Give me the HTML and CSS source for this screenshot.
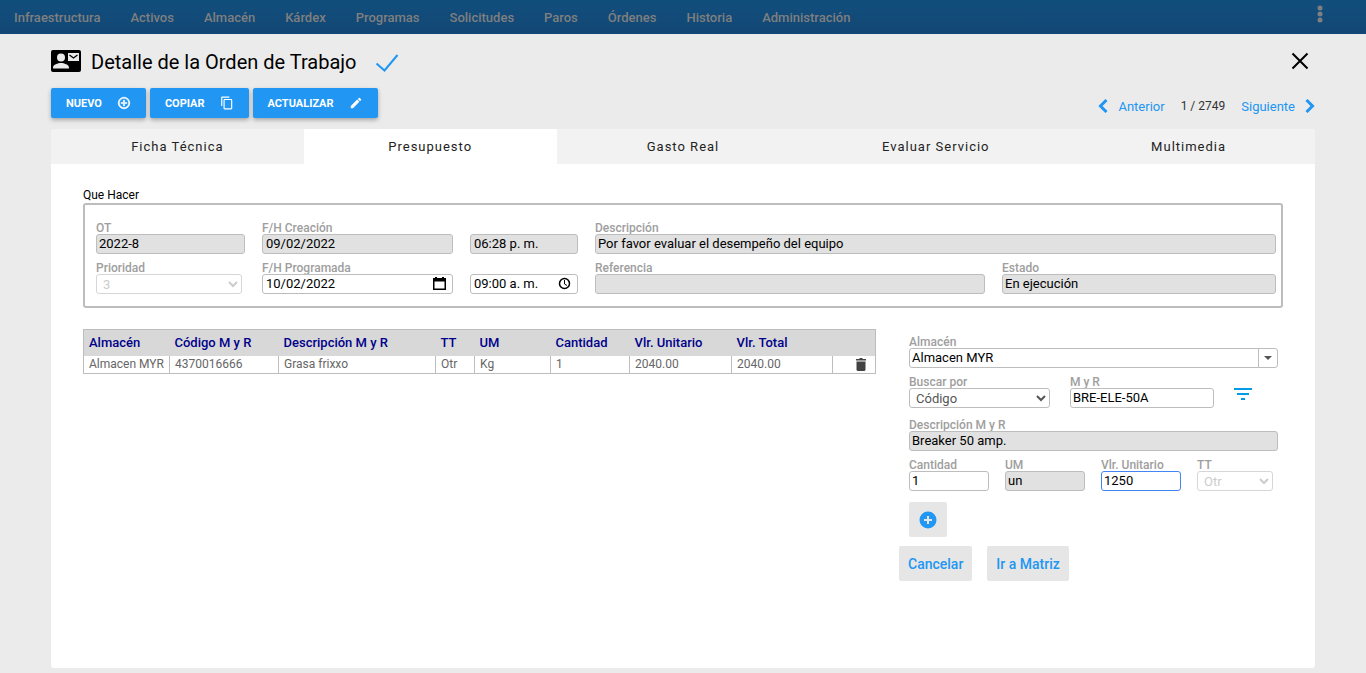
FILE: index.html
```
<!DOCTYPE html>
<html lang="es">

<head>
    <title>Detalle de la Orden de Trabajo</title>
    <meta charset="utf-8">
    <meta name="viewport" content="width=device-width, initial-scale=1">
    <link rel="stylesheet" href="styles.css">
</head>

<body>
    <nav class="navbar">
        <a href="#">Infraestructura</a>
        <a href="#">Activos</a>
        <a href="#">Almacén</a>
        <a href="#">Kárdex</a>
        <a href="#">Programas</a>
        <a href="#">Solicitudes</a>
        <a href="#">Paros</a>
        <a href="#">Órdenes</a>
        <a href="#">Historia</a>
        <a href="#">Administración</a>
        <button type="button" class="icon-btn more" aria-label="Más opciones">
            <svg width="24" height="24" viewBox="0 0 24 24" fill="currentColor">
                <circle cx="12" cy="6" r="2.500" />
                <circle cx="12" cy="12" r="2.500" />
                <circle cx="12" cy="18" r="2.500" />
            </svg>
        </button>
    </nav>

    <main class="page">
        <header class="title-row">
            <svg width="30" height="22" viewBox="0 0 30 22">
                <rect width="30" height="22" rx="2" />
                <circle cx="10" cy="7.500" r="4" fill="#ebebeb" />
                <path fill="#ebebeb" d="M2 18.500v-1c0-3 5-4.500 8-4.500s8 1.500 8 4.500v1zM17 3h11v8H17z" />
                <path fill="none" stroke="#000" stroke-width="1.200" d="M18.500 5l4 3 4-3" />
            </svg>
            <h1>Detalle de la Orden de Trabajo</h1>
            <svg class="check" width="24" height="20" viewBox="0 0 24 20" fill="none" stroke="#2196f3" stroke-width="2">
                <path d="M1.500 10.500l8 7L22.500 2" />
            </svg>
            <button type="button" class="icon-btn close" aria-label="Cerrar">
                <svg width="18" height="18" viewBox="0 0 18 18" fill="none" stroke="#000" stroke-width="2">
                    <path d="M1.500 1.500l15 15M16.500 1.500l-15 15" />
                </svg>
            </button>
        </header>

        <div class="toolbar">
            <button type="button" class="btn">NUEVO
                <svg width="14" height="14" viewBox="0 0 24 24" fill="currentColor" stroke="currentColor">
                    <path d="M13 7h-2v4H7v2h4v4h2v-4h4v-2h-4V7zm-1-5C6.480 2 2 6.480 2 12s4.480 10 10 10 10-4.480 10-10S17.520 2 12 2zm0 18c-4.410 0-8-3.590-8-8s3.590-8 8-8 8 3.590 8 8-3.590 8-8 8z" />
                </svg>
            </button>
            <button type="button" class="btn">COPIAR
                <svg width="14" height="14" viewBox="0 0 24 24" fill="currentColor">
                    <path d="M16 1H4c-1.100 0-2 .9-2 2v14h2V3h12V1zm3 4H8c-1.100 0-2 .9-2 2v14c0 1.100.9 2 2 2h11c1.100 0 2-.9 2-2V7c0-1.100-.9-2-2-2zm0 16H8V7h11v14z" />
                </svg>
            </button>
            <button type="button" class="btn">ACTUALIZAR
                <svg width="14" height="14" viewBox="0 0 24 24" fill="currentColor">
                    <path d="M3 17.250V21h3.750L17.810 9.940l-3.750-3.750L3 17.250zM20.710 7.040a1 1 0 0 0 0-1.410l-2.340-2.340a1 1 0 0 0-1.410 0l-1.830 1.830 3.750 3.750 1.830-1.830z" />
                </svg>
            </button>
            <div class="pager">
                <a href="#">
                    <svg width="10" height="14" viewBox="0 0 10 14" fill="none" stroke="currentColor" stroke-width="3">
                        <path d="M8.500 1L2.500 7l6 6" />
                    </svg>
                    Anterior</a>
                <span>1 / 2749</span>
                <a href="#">Siguiente
                    <svg width="10" height="14" viewBox="0 0 10 14" fill="none" stroke="currentColor" stroke-width="3">
                        <path d="M1.500 1l6 6-6 6" />
                    </svg>
                </a>
            </div>
        </div>

        <div class="tabs" role="tablist">
            <button type="button" role="tab">Ficha Técnica</button>
            <button type="button" role="tab" class="active" aria-selected="true">Presupuesto</button>
            <button type="button" role="tab">Gasto Real</button>
            <button type="button" role="tab">Evaluar Servicio</button>
            <button type="button" role="tab">Multimedia</button>
        </div>

        <section class="panel">
            <h2>Que Hacer</h2>
            <div class="order">
                <div class="field">
                    <label for="ot">OT</label>
                    <input type="text" id="ot" value="2022-8" readonly>
                </div>
                <div class="field">
                    <label for="creacion">F/H Creación</label>
                    <input type="text" id="creacion" class="date" value="09/02/2022" readonly>
                </div>
                <div class="field">
                    <input type="text" class="date" aria-label="Hora de creación" value="06:28 p. m." readonly>
                </div>
                <div class="field wide">
                    <label for="descripcion">Descripción</label>
                    <input type="text" id="descripcion" value="Por favor evaluar el desempeño del equipo" readonly>
                </div>
                <div class="field">
                    <label for="prioridad">Prioridad</label>
                    <select id="prioridad" class="priority" disabled>
                        <option>3</option>
                    </select>
                </div>
                <div class="field">
                    <label for="programada">F/H Programada</label>
                    <div class="picker">
                        <input type="text" id="programada" class="date" value="10/02/2022">
                        <button type="button" class="icon-btn" aria-label="Abrir calendario">
                            <svg width="13" height="14" viewBox="0 0 13 14">
                                <path fill-rule="evenodd" d="M2 0h2v1h5V0h2v1h2v12H0V1h2zM1.500 4.500v7h10v-7z" />
                            </svg>
                        </button>
                    </div>
                </div>
                <div class="field">
                    <div class="picker">
                        <input type="text" class="date" aria-label="Hora programada" value="09:00 a. m.">
                        <button type="button" class="icon-btn" aria-label="Abrir reloj">
                            <svg width="13" height="13" viewBox="0 0 13 13" fill="none" stroke="#000">
                                <circle cx="6.500" cy="6.500" r="5" stroke-width="1.500" />
                                <path d="M6.500 3v4l2.500 1.500" />
                            </svg>
                        </button>
                    </div>
                </div>
                <div class="field">
                    <label for="referencia">Referencia</label>
                    <input type="text" id="referencia" readonly>
                </div>
                <div class="field">
                    <label for="estado">Estado</label>
                    <input type="text" id="estado" value="En ejecución" readonly>
                </div>
            </div>

            <div class="budget">
                <table class="items">
                    <colgroup>
                        <col class="c-store">
                        <col class="c-code">
                        <col>
                        <col class="c-tt">
                        <col class="c-um">
                        <col class="c-qty">
                        <col class="c-price">
                        <col class="c-total">
                        <col class="c-del">
                    </colgroup>
                    <thead>
                        <tr>
                            <th>Almacén</th>
                            <th>Código M y R</th>
                            <th>Descripción M y R</th>
                            <th>TT</th>
                            <th>UM</th>
                            <th>Cantidad</th>
                            <th>Vlr. Unitario</th>
                            <th>Vlr. Total</th>
                            <th></th>
                        </tr>
                    </thead>
                    <tbody>
                        <tr>
                            <td>Almacen MYR</td>
                            <td>4370016666</td>
                            <td>Grasa frixxo</td>
                            <td>Otr</td>
                            <td>Kg</td>
                            <td>1</td>
                            <td>2040.00</td>
                            <td>2040.00</td>
                            <td>
                                <button type="button" class="icon-btn delete" aria-label="Eliminar">
                                    <svg width="10" height="13" viewBox="0 0 10 13" fill="#424242">
                                        <path d="M0 1h3l1-1h2l1 1h3v1.500H0zM.5 3.500h9V12l-1 1h-7l-1-1z" />
                                    </svg>
                                </button>
                            </td>
                        </tr>
                    </tbody>
                </table>

                <form class="entry">
                    <div class="entry-row">
                        <div class="field grow">
                            <label for="almacen">Almacén</label>
                            <div class="combo">
                                <input type="text" id="almacen" value="Almacen MYR">
                                <button type="button" aria-label="Ver almacenes">
                                    <svg width="8" height="4" viewBox="0 0 8 4" fill="#555">
                                        <path d="M0 0h8L4 4z" />
                                    </svg>
                                </button>
                            </div>
                        </div>
                    </div>
                    <div class="entry-row search">
                        <div class="field by">
                            <label for="buscar">Buscar por</label>
                            <select id="buscar">
                                <option>Código</option>
                            </select>
                        </div>
                        <div class="field code">
                            <label for="myr">M y R</label>
                            <input type="text" id="myr" value="BRE-ELE-50A">
                        </div>
                        <button type="button" class="icon-btn filter" aria-label="Filtrar">
                            <svg width="18" height="12" viewBox="0 0 18 12" fill="#039be5">
                                <path d="M0 0h18v2H0zM3 5h12v2H3zM7 10h4v2H7z" />
                            </svg>
                        </button>
                    </div>
                    <div class="entry-row">
                        <div class="field grow">
                            <label for="descmyr">Descripción M y R</label>
                            <input type="text" id="descmyr" value="Breaker 50 amp." readonly>
                        </div>
                    </div>
                    <div class="entry-row amounts">
                        <div class="field">
                            <label for="cantidad">Cantidad</label>
                            <input type="text" id="cantidad" value="1">
                        </div>
                        <div class="field">
                            <label for="um">UM</label>
                            <input type="text" id="um" value="un" readonly>
                        </div>
                        <div class="field">
                            <label for="unitario">Vlr. Unitario</label>
                            <input type="text" id="unitario" class="current" value="1250">
                        </div>
                        <div class="field">
                            <label for="tt">TT</label>
                            <select id="tt" class="type" disabled>
                                <option>Otr</option>
                            </select>
                        </div>
                    </div>
                    <button type="button" class="btn-flat add" aria-label="Agregar">
                        <svg width="18" height="18" viewBox="0 0 18 18">
                            <circle cx="9" cy="9" r="8.500" fill="#2196f3" />
                            <path fill="#e6e6e6" d="M8 5h2v3h3v2h-3v3H8v-3H5V8h3z" />
                        </svg>
                    </button>
                    <div class="actions">
                        <button type="button" class="btn-flat">Cancelar</button>
                        <button type="button" class="btn-flat">Ir a Matriz</button>
                    </div>
                </form>
            </div>
        </section>
    </main>
</body>

</html>
```

FILE: styles.css
```
* {
    box-sizing: border-box;
}

body {
    margin: 0;
    background: #ebebeb;
    color: #000;
    font: 13px Roboto, sans-serif;
}

a {
    text-decoration: none;
}

button,
input,
select {
    margin: 0;
    font-family: inherit;
}

svg {
    display: block;
    flex: none;
}

.icon-btn {
    display: block;
    padding: 0;
    border: 0;
    background: none;
    color: inherit;
    cursor: pointer;
}

/* top menu */
.navbar {
    display: flex;
    align-items: center;
    gap: 30px;
    height: 34px;
    padding: 0 34px 0 14px;
    background: linear-gradient(#114e7c, #134775);
    color: #7f7f7f;
    font-weight: 500;
}

.navbar a {
    color: inherit;
}

.more {
    margin-left: auto;
    margin-bottom: 6px;
}

/* page header */
.page {
    padding: 0 51px 5px;
}

.title-row {
    display: flex;
    align-items: center;
    height: 54px;
}

.title-row h1 {
    margin: 2px 19px 0 10px;
    font-size: 20px;
    font-weight: 400;
    line-height: 24px;
}

.check {
    margin-top: 4px;
}

.close {
    margin-left: auto;
    margin-right: 6px;
}

.toolbar {
    display: flex;
    gap: 4px;
    margin-bottom: 11px;
}

.btn {
    display: flex;
    align-items: center;
    gap: 15px;
    height: 30px;
    padding: 0 15px;
    border: 0;
    border-radius: 2px;
    background: #2196f3;
    box-shadow: 0 2px 4px rgba(0, 0, 0, .3);
    color: #fff;
    font-size: 11px;
    font-weight: 700;
    cursor: pointer;
}

.pager {
    display: flex;
    align-items: center;
    gap: 16px;
    height: 36px;
    margin: 0 0 -6px auto;
    font-size: 12px;
    color: #333;
}

.pager a {
    display: flex;
    align-items: center;
    gap: 10px;
    color: #2196f3;
    font-size: 13px;
}

/* tabs */
.tabs {
    display: flex;
    border-radius: 3px 3px 0 0;
    overflow: hidden;
}

.tabs button {
    flex: 1;
    height: 35px;
    padding: 0;
    border: 0;
    background: #f2f2f2;
    color: #222;
    font-size: 13px;
    letter-spacing: 1px;
    cursor: pointer;
}

.tabs .active {
    background: #fff;
}

.panel {
    min-height: 504px;
    padding: 24px 32px;
    border-radius: 0 0 3px 3px;
    background: #fff;
}

.panel h2 {
    margin: 0 0 1px;
    font-size: 12px;
    font-weight: 400;
    line-height: 14px;
}

/* form fields */
.field {
    display: flex;
    flex-direction: column;
    justify-content: flex-end;
    min-width: 0;
}

.field label {
    color: #9e9e9e;
    font-size: 12px;
    font-weight: 500;
    line-height: 12px;
}

.field input,
.field select {
    width: 100%;
    height: 20px;
    padding: 0 2px 2px;
    border: 1px solid #bdbdbd;
    border-radius: 3px;
    background: #fff;
    color: #000;
    font-size: 13px;
    outline: none;
}

.field select {
    padding-bottom: 0;
    color: #555;
}

.field select:disabled {
    border-color: #d6d6d6;
    color: #ccc;
    opacity: 1;
}

.field input[readonly] {
    background: #e1e1e1;
}

.field .date {
    padding-left: 3px;
}

.field .current {
    border-color: #4285f4;
}

.priority {
    max-width: 146px;
}

.order {
    display: grid;
    grid-template-columns: 149px 191px 108px 1fr 274px;
    gap: 8px 17px;
    padding: 17px 5px 12px 11px;
    border: 2px solid #bdbdbd;
    border-radius: 3px;
}

.wide {
    grid-column: span 2;
}

.picker {
    position: relative;
}

.picker .icon-btn {
    position: absolute;
    top: 3px;
    right: 7px;
}

.combo {
    display: flex;
}

.field .combo input {
    border-radius: 3px 0 0 3px;
}

.combo button {
    display: flex;
    flex: none;
    align-items: center;
    justify-content: center;
    width: 20px;
    margin-left: -1px;
    padding: 0;
    border: 1px solid #bdbdbd;
    border-radius: 0 3px 3px 0;
    background: #fff;
}

/* budget */
.budget {
    display: flex;
    align-items: flex-start;
    gap: 23px;
    margin-top: 21px;
}

.items {
    flex: 1;
    table-layout: fixed;
    border-collapse: collapse;
    border: 1px solid #bdbdbd;
}

.items th {
    height: 26px;
    padding: 0 5px 1px;
    background: #d8d8d8;
    color: #00008b;
    font-weight: 500;
    text-align: left;
    white-space: nowrap;
}

.items td {
    height: 18px;
    padding: 0 5px;
    border-left: 1px solid #bdbdbd;
    color: #666;
    font-size: 12px;
    line-height: 16px;
    white-space: nowrap;
}

.c-store {
    width: 86px;
}

.c-code {
    width: 109px;
}

.c-tt {
    width: 39px;
}

.c-um {
    width: 76px;
}

.c-qty {
    width: 79px;
}

.c-price {
    width: 102px;
}

.c-total {
    width: 101px;
}

.c-del {
    width: 43px;
}

.delete {
    margin-left: auto;
    margin-right: 4px;
}

.entry {
    width: 384px;
    padding-top: 7px;
}

.entry-row {
    display: flex;
    margin: 0 5px 8px 10px;
}

.search {
    margin-bottom: 11px;
}

.grow {
    flex: 1;
}

.by {
    width: 141px;
    margin-right: 20px;
}

.code {
    width: 144px;
}

.filter {
    align-self: flex-end;
    margin: 0 0 8px 20px;
}

.amounts {
    gap: 16px;
    margin-bottom: 11px;
}

.amounts .field {
    width: 80px;
}

.amounts .type {
    width: 76px;
}

.btn-flat {
    height: 35px;
    padding: 0 9px;
    border: 0;
    border-radius: 2px;
    background: #e6e6e6;
    color: #2196f3;
    font-size: 14px;
    font-weight: 500;
    cursor: pointer;
}

.add {
    display: block;
    margin: 0 0 9px 10px;
    padding: 0 10px;
}

.actions {
    display: flex;
    gap: 15px;
}
```
